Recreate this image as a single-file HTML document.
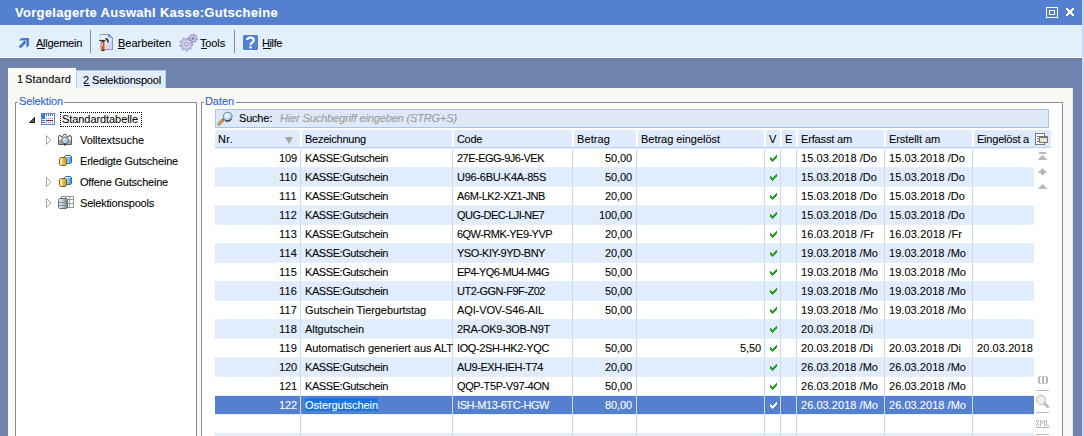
<!DOCTYPE html>
<html><head><meta charset="utf-8"><style>
html,body{margin:0;padding:0;width:1084px;height:436px;overflow:hidden;}
body{position:relative;font-family:"Liberation Sans",sans-serif;font-size:11px;}
.r{position:absolute;}
.t{position:absolute;white-space:nowrap;line-height:13px;-webkit-text-stroke:0.08px currentColor;}
</style></head><body>
<div class="r" style="left:0px;top:0px;width:1084px;height:436px;background:#6f83ad"></div>
<div class="r" style="left:1082px;top:0px;width:2px;height:436px;background:#c7d9f5"></div>
<div class="r" style="left:0px;top:0px;width:1082px;height:25px;background:#5580d0"></div>
<div class="t" style="top:6px;color:#fff;font-size:13px;letter-spacing:0.294px;font-weight:bold;left:15px;">Vorgelagerte Auswahl Kasse:Gutscheine</div>
<svg class="r" style="left:1046px;top:7px" width="12" height="11" viewBox="1046 7 12 11"><rect x="1046" y="7" width="12" height="1" fill="#ffffff"/><rect x="1046" y="8" width="1" height="1" fill="#ffffff"/><rect x="1057" y="8" width="1" height="1" fill="#ffffff"/><rect x="1046" y="9" width="1" height="1" fill="#ffffff"/><rect x="1057" y="9" width="1" height="1" fill="#ffffff"/><rect x="1046" y="10" width="1" height="1" fill="#ffffff"/><rect x="1049" y="10" width="6" height="1" fill="#ffffff"/><rect x="1057" y="10" width="1" height="1" fill="#ffffff"/><rect x="1046" y="11" width="1" height="1" fill="#ffffff"/><rect x="1049" y="11" width="1" height="1" fill="#ffffff"/><rect x="1054" y="11" width="1" height="1" fill="#ffffff"/><rect x="1057" y="11" width="1" height="1" fill="#ffffff"/><rect x="1046" y="12" width="1" height="1" fill="#ffffff"/><rect x="1049" y="12" width="1" height="1" fill="#ffffff"/><rect x="1054" y="12" width="1" height="1" fill="#ffffff"/><rect x="1057" y="12" width="1" height="1" fill="#ffffff"/><rect x="1046" y="13" width="1" height="1" fill="#ffffff"/><rect x="1049" y="13" width="1" height="1" fill="#ffffff"/><rect x="1054" y="13" width="1" height="1" fill="#ffffff"/><rect x="1057" y="13" width="1" height="1" fill="#ffffff"/><rect x="1046" y="14" width="1" height="1" fill="#ffffff"/><rect x="1049" y="14" width="6" height="1" fill="#ffffff"/><rect x="1057" y="14" width="1" height="1" fill="#ffffff"/><rect x="1046" y="15" width="1" height="1" fill="#ffffff"/><rect x="1057" y="15" width="1" height="1" fill="#ffffff"/><rect x="1046" y="16" width="1" height="1" fill="#ffffff"/><rect x="1057" y="16" width="1" height="1" fill="#ffffff"/><rect x="1046" y="17" width="12" height="1" fill="#ffffff"/></svg>
<svg class="r" style="left:1066px;top:8px" width="8" height="8" viewBox="1066 8 8 8"><rect x="1066" y="8" width="2" height="1" fill="#ffffff"/><rect x="1072" y="8" width="2" height="1" fill="#ffffff"/><rect x="1066" y="9" width="3" height="1" fill="#ffffff"/><rect x="1071" y="9" width="3" height="1" fill="#ffffff"/><rect x="1067" y="10" width="6" height="1" fill="#ffffff"/><rect x="1068" y="11" width="4" height="1" fill="#ffffff"/><rect x="1068" y="12" width="4" height="1" fill="#ffffff"/><rect x="1067" y="13" width="6" height="1" fill="#ffffff"/><rect x="1066" y="14" width="3" height="1" fill="#ffffff"/><rect x="1071" y="14" width="3" height="1" fill="#ffffff"/><rect x="1066" y="15" width="2" height="1" fill="#ffffff"/><rect x="1072" y="15" width="2" height="1" fill="#ffffff"/></svg>
<div class="r" style="left:0px;top:25px;width:1082px;height:32px;background:#e2effd"></div>
<div class="r" style="left:0px;top:57px;width:1082px;height:1px;background:#ffffff"></div>
<div class="t" style="top:37px;color:#000;font-size:11px;letter-spacing:-0.256px;left:36px;">Allgemein</div>
<div class="r" style="left:37px;top:48px;width:8px;height:1px;background:#000"></div>
<div class="t" style="top:37px;color:#000;font-size:11px;letter-spacing:-0.020px;left:118px;">Bearbeiten</div>
<div class="r" style="left:118px;top:48px;width:7px;height:1px;background:#000"></div>
<div class="t" style="top:37px;color:#000;font-size:11px;letter-spacing:-0.136px;left:200px;">Tools</div>
<div class="r" style="left:201px;top:48px;width:6px;height:1px;background:#000"></div>
<div class="t" style="top:37px;color:#000;font-size:11px;letter-spacing:-0.401px;left:262px;">Hilfe</div>
<div class="r" style="left:263px;top:48px;width:8px;height:1px;background:#000"></div>
<div class="r" style="left:90px;top:30px;width:1px;height:23px;background:#8c8984"></div>
<div class="r" style="left:234px;top:30px;width:1px;height:23px;background:#8c8984"></div>
<svg class="r" style="left:14px;top:32px" width="20" height="20" viewBox="14 32 20 20"><path d="M19 40.6 L21.6 38 L29 38 L29 45.6 L26.5 48.1 L26.5 40.6 Z" fill="#4b78d0"/><path d="M19.6 47.4 L25.5 41.5" stroke="#4b78d0" stroke-width="2.8"/></svg>
<svg class="r" style="left:96px;top:30px" width="22" height="24" viewBox="96 30 22 24"><defs><linearGradient id="pg" x1="0" y1="0" x2="1" y2="1"><stop offset="0" stop-color="#ffffff"/><stop offset="1" stop-color="#c4ccf0"/></linearGradient></defs><path d="M100.5 34.5 H109.5 L112.5 37.5 V49.5 H100.5 Z" fill="url(#pg)" stroke="#8a96b8"/><path d="M100.5 34.5 V49.5" stroke="#a8c0e8"/><path d="M109.5 34.5 V37.5 H112.5" fill="none" stroke="#8a96b8"/><rect x="108" y="35" width="2" height="2" fill="#3aa0f0"/><path d="M99 38 H106 V41 H99 Z" fill="#d8d8d8"/><path d="M99 38 H106 V39 H99 Z" fill="#f4f4f4"/><path d="M99 40.5 H105.5" stroke="#404040" stroke-width="1"/><path d="M105.5 38.5 Q108 38.8 108 42.5" fill="none" stroke="#202020" stroke-width="1.4"/><rect x="101.5" y="41" width="3" height="1.5" fill="#3a2a20"/><rect x="101.5" y="42.5" width="3" height="8" fill="#e4481a"/><rect x="102" y="43" width="1" height="3" fill="#f8d040"/><rect x="101.5" y="50" width="3" height="1" fill="#401808"/></svg>
<svg class="r" style="left:176px;top:30px" width="24" height="24" viewBox="176 30 24 24"><path d="M196.40,38.43 L197.58,38.91 L197.38,39.90 L196.10,39.89 L195.45,40.86 L195.95,42.03 L195.11,42.59 L194.22,41.68 L193.07,41.90 L192.59,43.08 L191.60,42.88 L191.61,41.60 L190.64,40.95 L189.47,41.45 L188.91,40.61 L189.82,39.72 L189.60,38.57 L188.42,38.09 L188.62,37.10 L189.90,37.11 L190.55,36.14 L190.05,34.97 L190.89,34.41 L191.78,35.32 L192.93,35.10 L193.41,33.92 L194.40,34.12 L194.39,35.40 L195.36,36.05 L196.53,35.55 L197.09,36.39 L196.18,37.28Z" fill="#c4c0e0" stroke="#8c86b8" stroke-width="0.8"/><circle cx="193" cy="38.5" r="1.3" fill="#8c86b8"/><path d="M191.28,43.82 L192.90,44.31 L192.77,45.60 L191.08,45.76 L190.42,47.13 L191.35,48.55 L190.42,49.45 L189.03,48.49 L187.63,49.12 L187.43,50.80 L186.15,50.90 L185.70,49.26 L184.22,48.85 L182.99,50.01 L181.94,49.26 L182.65,47.71 L181.79,46.45 L180.09,46.54 L179.78,45.29 L181.31,44.57 L181.46,43.05 L180.10,42.03 L180.66,40.87 L182.30,41.30 L183.40,40.23 L183.01,38.58 L184.19,38.05 L185.17,39.43 L186.69,39.32 L187.46,37.80 L188.70,38.15 L188.56,39.84 L189.81,40.74 L191.37,40.07 L192.09,41.13 L190.90,42.34Z" fill="#d0cce8" stroke="#8c86b8" stroke-width="0.8"/><ellipse cx="186.3" cy="44.3" rx="2" ry="1.4" fill="#f0f0fa" stroke="#8c86b8" stroke-width="0.8"/></svg>
<svg class="r" style="left:243px;top:35px" width="15" height="15" viewBox="243 35 15 15"><path d="M244 35 H257 L258 36 V49 L257 50 H244 L243 49 V36 Z" fill="#5080d0"/><path d="M247.3 40 Q247.3 37.6 250.5 37.6 Q253.8 37.6 253.8 40.2 Q253.8 42 251.6 43 Q250.6 43.5 250.6 45" fill="none" stroke="#fff" stroke-width="2.2"/><rect x="249.4" y="46.2" width="2.4" height="2.2" fill="#fff"/></svg>
<div class="r" style="left:8px;top:68px;width:68px;height:20px;background:#f9f8f4;border-top:1px solid #fff;box-sizing:border-box"></div>
<div class="r" style="left:76px;top:70px;width:90px;height:19px;background:#e0ecfb;border:1px solid #b4cbe9;border-bottom:none;box-sizing:border-box"></div>
<div class="t" style="top:73px;color:#000;font-size:11px;letter-spacing:-1.117px;left:17px;">1</div>
<div class="t" style="top:73px;color:#000;font-size:11px;letter-spacing:0.170px;left:25px;">Standard</div>
<div class="t" style="top:74px;color:#000;font-size:11px;letter-spacing:-0.117px;left:83px;">2</div>
<div class="r" style="left:84px;top:85px;width:6px;height:1px;background:#000"></div>
<div class="t" style="top:74px;color:#000;font-size:11px;letter-spacing:-0.182px;left:92px;">Selektionspool</div>
<div class="r" style="left:8px;top:88px;width:1064px;height:348px;background:#f9f8f4"></div>
<div class="r" style="left:1072px;top:88px;width:1px;height:348px;background:#dde5f1"></div>
<div class="r" style="left:8px;top:68px;width:1px;height:368px;background:#fbfcfe"></div>
<div class="r" style="left:15px;top:102px;width:182px;height:340px;border:1px solid #8c8c8c;background:#fff;box-sizing:border-box"></div>
<div class="r" style="left:18px;top:95px;width:46px;height:10px;background:#f9f8f4"></div>
<div class="t" style="top:95px;color:#2c63d4;font-size:11px;letter-spacing:-0.139px;left:19px;">Selektion</div>
<div class="r" style="left:201px;top:102px;width:862px;height:340px;border:1px solid #8c8c8c;background:#fff;box-sizing:border-box"></div>
<div class="r" style="left:204px;top:95px;width:32px;height:10px;background:#f9f8f4"></div>
<div class="t" style="top:95px;color:#2c63d4;font-size:11px;letter-spacing:-0.070px;left:205px;">Daten</div>
<svg class="r" style="left:29px;top:117px" width="6" height="6" viewBox="29 117 6 6"><rect x="34" y="117" width="1" height="1" fill="#262626"/><rect x="33" y="118" width="2" height="1" fill="#262626"/><rect x="32" y="119" width="1" height="1" fill="#262626"/><rect x="33" y="119" width="1" height="1" fill="#5a5a5a"/><rect x="34" y="119" width="1" height="1" fill="#262626"/><rect x="31" y="120" width="1" height="1" fill="#262626"/><rect x="32" y="120" width="2" height="1" fill="#5a5a5a"/><rect x="34" y="120" width="1" height="1" fill="#262626"/><rect x="30" y="121" width="1" height="1" fill="#262626"/><rect x="31" y="121" width="3" height="1" fill="#5a5a5a"/><rect x="34" y="121" width="1" height="1" fill="#262626"/><rect x="29" y="122" width="6" height="1" fill="#262626"/></svg>
<svg class="r" style="left:41px;top:113px" width="14" height="12" viewBox="41 113 14 12"><rect x="41" y="113" width="14" height="1" fill="#7680c4"/><rect x="41" y="114" width="1" height="1" fill="#7680c4"/><rect x="42" y="114" width="3" height="1" fill="#2f7ee0"/><rect x="45" y="114" width="1" height="1" fill="#ffffff"/><rect x="46" y="114" width="1" height="1" fill="#2f7ee0"/><rect x="47" y="114" width="1" height="1" fill="#ffffff"/><rect x="48" y="114" width="1" height="1" fill="#2f7ee0"/><rect x="49" y="114" width="1" height="1" fill="#ffffff"/><rect x="50" y="114" width="1" height="1" fill="#2f7ee0"/><rect x="51" y="114" width="1" height="1" fill="#ffffff"/><rect x="52" y="114" width="1" height="1" fill="#2f7ee0"/><rect x="53" y="114" width="1" height="1" fill="#ffffff"/><rect x="54" y="114" width="1" height="1" fill="#7680c4"/><rect x="41" y="115" width="1" height="1" fill="#7680c4"/><rect x="42" y="115" width="3" height="1" fill="#2f7ee0"/><rect x="45" y="115" width="1" height="1" fill="#ffffff"/><rect x="46" y="115" width="1" height="1" fill="#2f7ee0"/><rect x="47" y="115" width="1" height="1" fill="#ffffff"/><rect x="48" y="115" width="1" height="1" fill="#2f7ee0"/><rect x="49" y="115" width="1" height="1" fill="#ffffff"/><rect x="50" y="115" width="1" height="1" fill="#2f7ee0"/><rect x="51" y="115" width="1" height="1" fill="#ffffff"/><rect x="52" y="115" width="1" height="1" fill="#2f7ee0"/><rect x="53" y="115" width="1" height="1" fill="#ffffff"/><rect x="54" y="115" width="1" height="1" fill="#7680c4"/><rect x="41" y="116" width="1" height="1" fill="#7680c4"/><rect x="42" y="116" width="3" height="1" fill="#2f7ee0"/><rect x="45" y="116" width="9" height="1" fill="#ffffff"/><rect x="54" y="116" width="1" height="1" fill="#7680c4"/><rect x="41" y="117" width="1" height="1" fill="#7680c4"/><rect x="42" y="117" width="3" height="1" fill="#2f7ee0"/><rect x="45" y="117" width="1" height="1" fill="#ffffff"/><rect x="46" y="117" width="8" height="1" fill="#eef3ff"/><rect x="54" y="117" width="1" height="1" fill="#7680c4"/><rect x="41" y="118" width="1" height="1" fill="#7680c4"/><rect x="42" y="118" width="3" height="1" fill="#2f7ee0"/><rect x="45" y="118" width="1" height="1" fill="#ffffff"/><rect x="46" y="118" width="1" height="1" fill="#9096cc"/><rect x="47" y="118" width="1" height="1" fill="#eef3ff"/><rect x="48" y="118" width="1" height="1" fill="#9096cc"/><rect x="49" y="118" width="1" height="1" fill="#eef3ff"/><rect x="50" y="118" width="1" height="1" fill="#9096cc"/><rect x="51" y="118" width="1" height="1" fill="#eef3ff"/><rect x="52" y="118" width="1" height="1" fill="#9096cc"/><rect x="53" y="118" width="1" height="1" fill="#eef3ff"/><rect x="54" y="118" width="1" height="1" fill="#7680c4"/><rect x="41" y="119" width="1" height="1" fill="#7680c4"/><rect x="42" y="119" width="4" height="1" fill="#ffffff"/><rect x="46" y="119" width="8" height="1" fill="#eef3ff"/><rect x="54" y="119" width="1" height="1" fill="#7680c4"/><rect x="41" y="120" width="1" height="1" fill="#7680c4"/><rect x="42" y="120" width="3" height="1" fill="#2f7ee0"/><rect x="45" y="120" width="1" height="1" fill="#ffffff"/><rect x="46" y="120" width="1" height="1" fill="#303030"/><rect x="47" y="120" width="1" height="1" fill="#ff1818"/><rect x="48" y="120" width="1" height="1" fill="#303030"/><rect x="49" y="120" width="1" height="1" fill="#ff1818"/><rect x="50" y="120" width="1" height="1" fill="#303030"/><rect x="51" y="120" width="1" height="1" fill="#ff1818"/><rect x="52" y="120" width="1" height="1" fill="#303030"/><rect x="53" y="120" width="1" height="1" fill="#eef3ff"/><rect x="54" y="120" width="1" height="1" fill="#7680c4"/><rect x="41" y="121" width="1" height="1" fill="#7680c4"/><rect x="42" y="121" width="4" height="1" fill="#ffffff"/><rect x="46" y="121" width="8" height="1" fill="#eef3ff"/><rect x="54" y="121" width="1" height="1" fill="#7680c4"/><rect x="41" y="122" width="1" height="1" fill="#7680c4"/><rect x="42" y="122" width="3" height="1" fill="#2f7ee0"/><rect x="45" y="122" width="1" height="1" fill="#ffffff"/><rect x="46" y="122" width="1" height="1" fill="#9096cc"/><rect x="47" y="122" width="1" height="1" fill="#eef3ff"/><rect x="48" y="122" width="1" height="1" fill="#9096cc"/><rect x="49" y="122" width="1" height="1" fill="#eef3ff"/><rect x="50" y="122" width="1" height="1" fill="#9096cc"/><rect x="51" y="122" width="1" height="1" fill="#eef3ff"/><rect x="52" y="122" width="1" height="1" fill="#9096cc"/><rect x="53" y="122" width="1" height="1" fill="#eef3ff"/><rect x="54" y="122" width="1" height="1" fill="#7680c4"/><rect x="41" y="123" width="1" height="1" fill="#7680c4"/><rect x="42" y="123" width="4" height="1" fill="#ffffff"/><rect x="46" y="123" width="8" height="1" fill="#eef3ff"/><rect x="54" y="123" width="1" height="1" fill="#7680c4"/><rect x="41" y="124" width="14" height="1" fill="#7680c4"/></svg>
<div class="r" style="left:60px;top:112px;width:82px;height:15px;border:1px dotted #000;box-sizing:border-box"></div>
<div class="t" style="top:113px;color:#000;font-size:11px;letter-spacing:-0.070px;left:62px;">Standardtabelle</div>
<svg class="r" style="left:45px;top:135px" width="8" height="10" viewBox="45 135 8 10"><path d="M46.5 135.5 L50.8 140 L46.5 144.5 Z" fill="#fff" stroke="#a6a6a6"/></svg>
<svg class="r" style="left:57px;top:133px" width="16" height="13" viewBox="57 133 16 13"><path d="M58.5 136.5 H59 V135.5 H60.5 V136.5 H62.5 L63.5 135 V134.5 H66 V135 L67 136.5 H69 V135.5 H70.5 V136.5 H71.5 V144.5 H58.5 Z" fill="#ffffff" stroke="#6a5a4a"/><rect x="59" y="140" width="12" height="4" fill="#a8a8a8"/><circle cx="65" cy="140.3" r="3.4" fill="#a6d0fa" stroke="#6a5a4a"/><rect x="63.3" y="138.3" width="1.6" height="1.6" fill="#ffffff"/><rect x="64" y="144" width="2" height="1.5" fill="#3a3028"/></svg>
<div class="t" style="top:134px;color:#000;font-size:11px;letter-spacing:-0.063px;left:80px;">Volltextsuche</div>
<svg class="r" style="left:58px;top:155px" width="16" height="12" viewBox="58 155 16 12"><defs><linearGradient id="bl" x1="0" y1="0" x2="1" y2="0"><stop offset="0" stop-color="#dcecff"/><stop offset="0.5" stop-color="#8cc0f4"/><stop offset="1" stop-color="#3c88d8"/></linearGradient><linearGradient id="yl" x1="0" y1="0" x2="1" y2="0"><stop offset="0" stop-color="#fff0b0"/><stop offset="0.35" stop-color="#f0c850"/><stop offset="1" stop-color="#c89820"/></linearGradient></defs><path d="M64.5 156.5 L65.5 155.5 H70.5 L71.5 156.5 V162.5 L70.5 163.5 H65.5 L64.5 162.5 Z" fill="url(#bl)" stroke="#2a68b8"/><path d="M65.5 156.5 H70.5" stroke="#ffffff" stroke-width="1"/><path d="M59.5 158.5 L60.5 157.5 H65.5 L66.5 158.5 V164.5 L65.5 165.5 H60.5 L59.5 164.5 Z" fill="url(#yl)" stroke="#7a6428"/><rect x="61" y="159" width="1" height="5" fill="#ffffff"/></svg>
<div class="t" style="top:155px;color:#000;font-size:11px;letter-spacing:-0.206px;left:80px;">Erledigte Gutscheine</div>
<svg class="r" style="left:45px;top:177px" width="8" height="10" viewBox="45 177 8 10"><path d="M46.5 177.5 L50.8 182 L46.5 186.5 Z" fill="#fff" stroke="#a6a6a6"/></svg>
<svg class="r" style="left:58px;top:176px" width="16" height="12" viewBox="58 176 16 12"><defs><linearGradient id="bl" x1="0" y1="0" x2="1" y2="0"><stop offset="0" stop-color="#dcecff"/><stop offset="0.5" stop-color="#8cc0f4"/><stop offset="1" stop-color="#3c88d8"/></linearGradient><linearGradient id="yl" x1="0" y1="0" x2="1" y2="0"><stop offset="0" stop-color="#fff0b0"/><stop offset="0.35" stop-color="#f0c850"/><stop offset="1" stop-color="#c89820"/></linearGradient></defs><path d="M64.5 177.5 L65.5 176.5 H70.5 L71.5 177.5 V183.5 L70.5 184.5 H65.5 L64.5 183.5 Z" fill="url(#bl)" stroke="#2a68b8"/><path d="M65.5 177.5 H70.5" stroke="#ffffff" stroke-width="1"/><path d="M59.5 179.5 L60.5 178.5 H65.5 L66.5 179.5 V185.5 L65.5 186.5 H60.5 L59.5 185.5 Z" fill="url(#yl)" stroke="#7a6428"/><rect x="61" y="180" width="1" height="5" fill="#ffffff"/></svg>
<div class="t" style="top:176px;color:#000;font-size:11px;letter-spacing:-0.207px;left:80px;">Offene Gutscheine</div>
<svg class="r" style="left:45px;top:198px" width="8" height="10" viewBox="45 198 8 10"><path d="M46.5 198.5 L50.8 203 L46.5 207.5 Z" fill="#fff" stroke="#a6a6a6"/></svg>
<svg class="r" style="left:57px;top:195px" width="18" height="14" viewBox="57 195 18 14"><rect x="61.5" y="196.5" width="12" height="11" fill="#ffffff" stroke="#9a9a9a"/><path d="M62 199.5 H73 M62 203.5 H73 M65.5 197 V207 M69.5 197 V207" stroke="#9a9a9a"/><defs><linearGradient id="cy" x1="0" y1="0" x2="1" y2="0"><stop offset="0" stop-color="#e8eef2"/><stop offset="0.5" stop-color="#b8c8d0"/><stop offset="1" stop-color="#607880"/></linearGradient></defs><path d="M58.5 199.5 L59.5 198.5 H66.5 L67.5 199.5 V207.5 L66.5 208.5 H59.5 L58.5 207.5 Z" fill="url(#cy)" stroke="#6a6a6a"/><path d="M59 202.5 H67 M59 205.5 H67" stroke="#7a8a90" stroke-width="0.8"/></svg>
<div class="t" style="top:197px;color:#000;font-size:11px;letter-spacing:-0.203px;left:80px;">Selektionspools</div>
<div class="r" style="left:215px;top:109px;width:834px;height:19px;background:#dfe8f6;border:1px solid #a9c4ec;box-sizing:border-box"></div>
<svg class="r" style="left:216px;top:110px" width="20" height="17" viewBox="216 110 20 17"><defs><radialGradient id="lg" cx="0.35" cy="0.35" r="0.7"><stop offset="0" stop-color="#ffffff"/><stop offset="0.5" stop-color="#c8ecfc"/><stop offset="1" stop-color="#90c8f0"/></radialGradient></defs><path d="M218.8 124.2 L223.2 119.8" stroke="#6a6a7a" stroke-width="3" stroke-linecap="round"/><path d="M218.6 124.4 L222.4 120.6" stroke="#f0a030" stroke-width="2" stroke-linecap="round"/><circle cx="227.8" cy="116.6" r="4.3" fill="url(#lg)" stroke="#7a8898" stroke-width="1.1"/><path d="M231.2 118.8 A4.3 4.3 0 0 1 225.4 120.6" fill="none" stroke="#303840" stroke-width="1.3"/></svg>
<div class="t" style="top:112px;color:#000;font-size:11px;letter-spacing:-0.208px;left:239px;">Suche:</div>
<div class="t" style="top:112px;color:#9a9a9a;font-size:11px;letter-spacing:-0.144px;font-style:italic;left:280px;">Hier Suchbegriff eingeben (STRG+S)</div>
<div class="r" style="left:215px;top:130px;width:836px;height:17px;background:#dfebfc"></div>
<div class="r" style="left:215px;top:147px;width:836px;height:1px;background:#bcd2f2"></div>
<div class="r" style="left:300px;top:130px;width:2px;height:17px;background:#fff"></div>
<div class="r" style="left:452px;top:130px;width:2px;height:17px;background:#fff"></div>
<div class="r" style="left:572px;top:130px;width:2px;height:17px;background:#fff"></div>
<div class="r" style="left:636px;top:130px;width:2px;height:17px;background:#fff"></div>
<div class="r" style="left:764px;top:130px;width:2px;height:17px;background:#fff"></div>
<div class="r" style="left:780px;top:130px;width:2px;height:17px;background:#fff"></div>
<div class="r" style="left:796px;top:130px;width:2px;height:17px;background:#fff"></div>
<div class="r" style="left:884px;top:130px;width:2px;height:17px;background:#fff"></div>
<div class="r" style="left:972px;top:130px;width:2px;height:17px;background:#fff"></div>
<div class="t" style="top:133px;color:#000;font-size:11px;letter-spacing:0.315px;left:218px;">Nr.</div>
<div class="t" style="top:133px;color:#000;font-size:11px;letter-spacing:-0.237px;left:305px;">Bezeichnung</div>
<div class="t" style="top:133px;color:#000;font-size:11px;letter-spacing:-0.324px;left:457px;">Code</div>
<div class="t" style="top:133px;color:#000;font-size:11px;letter-spacing:0.099px;left:577px;">Betrag</div>
<div class="t" style="top:133px;color:#000;font-size:11px;letter-spacing:-0.031px;left:641px;">Betrag eingelöst</div>
<div class="t" style="top:133px;color:#000;font-size:11px;letter-spacing:-0.338px;left:769px;">V</div>
<div class="t" style="top:133px;color:#000;font-size:11px;letter-spacing:-1.338px;left:785px;">E</div>
<div class="t" style="top:133px;color:#000;font-size:11px;letter-spacing:-0.157px;left:801px;">Erfasst am</div>
<div class="t" style="top:133px;color:#000;font-size:11px;letter-spacing:-0.087px;left:889px;">Erstellt am</div>
<div class="t" style="top:133px;color:#000;font-size:11px;letter-spacing:-0.220px;left:977px;">Eingelöst a</div>
<svg class="r" style="left:285px;top:137px" width="9" height="7" viewBox="285 137 9 7"><path d="M285 137 H293 L289 144 Z" fill="#a8a498"/></svg>
<svg class="r" style="left:1034px;top:132px" width="16" height="14" viewBox="1034 132 16 14"><rect x="1035.5" y="133.5" width="9" height="11" fill="#fff" stroke="#767676"/><path d="M1037 136.5 H1040 M1037 139 H1040 M1037 141.5 H1040" stroke="#767676"/><rect x="1039.5" y="136.5" width="8" height="6" fill="#e8e8e0" stroke="#767676"/><rect x="1040" y="137" width="7" height="1" fill="#767676"/></svg>
<div class="r" style="left:215px;top:148px;width:819px;height:1px;background:#e6effd"></div>
<div class="r" style="left:215px;top:167px;width:819px;height:1px;background:#e6effd"></div>
<div class="r" style="left:215px;top:168px;width:819px;height:18px;background:#e1edfd"></div>
<div class="r" style="left:215px;top:186px;width:819px;height:1px;background:#e6effd"></div>
<div class="r" style="left:215px;top:205px;width:819px;height:1px;background:#e6effd"></div>
<div class="r" style="left:215px;top:206px;width:819px;height:18px;background:#e1edfd"></div>
<div class="r" style="left:215px;top:224px;width:819px;height:1px;background:#e6effd"></div>
<div class="r" style="left:215px;top:243px;width:819px;height:1px;background:#e6effd"></div>
<div class="r" style="left:215px;top:244px;width:819px;height:18px;background:#e1edfd"></div>
<div class="r" style="left:215px;top:262px;width:819px;height:1px;background:#e6effd"></div>
<div class="r" style="left:215px;top:281px;width:819px;height:1px;background:#e6effd"></div>
<div class="r" style="left:215px;top:282px;width:819px;height:18px;background:#e1edfd"></div>
<div class="r" style="left:215px;top:300px;width:819px;height:1px;background:#e6effd"></div>
<div class="r" style="left:215px;top:319px;width:819px;height:1px;background:#e6effd"></div>
<div class="r" style="left:215px;top:320px;width:819px;height:18px;background:#e1edfd"></div>
<div class="r" style="left:215px;top:338px;width:819px;height:1px;background:#e6effd"></div>
<div class="r" style="left:215px;top:357px;width:819px;height:1px;background:#e6effd"></div>
<div class="r" style="left:215px;top:358px;width:819px;height:18px;background:#e1edfd"></div>
<div class="r" style="left:215px;top:376px;width:819px;height:1px;background:#e6effd"></div>
<div class="r" style="left:215px;top:395px;width:819px;height:1px;background:#e6effd"></div>
<div class="r" style="left:215px;top:396px;width:819px;height:18px;background:#5580d0"></div>
<div class="r" style="left:215px;top:414px;width:819px;height:1px;background:#e6effd"></div>
<div class="r" style="left:215px;top:433px;width:819px;height:1px;background:#e6effd"></div>
<div class="r" style="left:215px;top:434px;width:819px;height:18px;background:#e1edfd"></div>
<div class="r" style="left:300px;top:149px;width:1px;height:287px;background:#c9dbf6"></div>
<div class="r" style="left:452px;top:149px;width:1px;height:287px;background:#c9dbf6"></div>
<div class="r" style="left:572px;top:149px;width:1px;height:287px;background:#c9dbf6"></div>
<div class="r" style="left:636px;top:149px;width:1px;height:287px;background:#c9dbf6"></div>
<div class="r" style="left:764px;top:149px;width:1px;height:287px;background:#c9dbf6"></div>
<div class="r" style="left:780px;top:149px;width:1px;height:287px;background:#c9dbf6"></div>
<div class="r" style="left:796px;top:149px;width:1px;height:287px;background:#c9dbf6"></div>
<div class="r" style="left:884px;top:149px;width:1px;height:287px;background:#c9dbf6"></div>
<div class="r" style="left:972px;top:149px;width:1px;height:287px;background:#c9dbf6"></div>
<div class="t" style="top:152px;color:#000;font-size:11px;letter-spacing:-0.117px;right:787px;">109</div>
<div class="t" style="top:152px;color:#000;font-size:11px;letter-spacing:-0.418px;left:305px;">KASSE:Gutschein</div>
<div class="t" style="top:152px;color:#000;font-size:11px;letter-spacing:-0.517px;left:457px;">27E-EGG-9J6-VEK</div>
<div class="t" style="top:152px;color:#000;font-size:11px;letter-spacing:-0.105px;right:452px;">50,00</div>
<svg class="r" style="left:770px;top:155px" width="7" height="7" viewBox="770 155 7 7"><path d="M776 155h1v1h-1zM775 156h1v1h-1zM776 156h1v1h-1zM770 157h1v1h-1zM774 157h1v1h-1zM775 157h1v1h-1zM776 157h1v1h-1zM770 158h1v1h-1zM771 158h1v1h-1zM773 158h1v1h-1zM774 158h1v1h-1zM775 158h1v1h-1zM770 159h1v1h-1zM771 159h1v1h-1zM772 159h1v1h-1zM773 159h1v1h-1zM774 159h1v1h-1zM771 160h1v1h-1zM772 160h1v1h-1zM773 160h1v1h-1zM772 161h1v1h-1z" fill="#22a020"/></svg>
<div class="t" style="top:152px;color:#000;font-size:11px;letter-spacing:0.055px;left:801px;">15.03.2018 /Do</div>
<div class="t" style="top:152px;color:#000;font-size:11px;letter-spacing:0.055px;left:889px;">15.03.2018 /Do</div>
<div class="t" style="top:171px;color:#000;font-size:11px;letter-spacing:0.155px;right:787px;">110</div>
<div class="t" style="top:171px;color:#000;font-size:11px;letter-spacing:-0.418px;left:305px;">KASSE:Gutschein</div>
<div class="t" style="top:171px;color:#000;font-size:11px;letter-spacing:-0.262px;left:457px;">U96-6BU-K4A-85S</div>
<div class="t" style="top:171px;color:#000;font-size:11px;letter-spacing:-0.105px;right:452px;">50,00</div>
<svg class="r" style="left:770px;top:174px" width="7" height="7" viewBox="770 174 7 7"><path d="M776 174h1v1h-1zM775 175h1v1h-1zM776 175h1v1h-1zM770 176h1v1h-1zM774 176h1v1h-1zM775 176h1v1h-1zM776 176h1v1h-1zM770 177h1v1h-1zM771 177h1v1h-1zM773 177h1v1h-1zM774 177h1v1h-1zM775 177h1v1h-1zM770 178h1v1h-1zM771 178h1v1h-1zM772 178h1v1h-1zM773 178h1v1h-1zM774 178h1v1h-1zM771 179h1v1h-1zM772 179h1v1h-1zM773 179h1v1h-1zM772 180h1v1h-1z" fill="#22a020"/></svg>
<div class="t" style="top:171px;color:#000;font-size:11px;letter-spacing:0.055px;left:801px;">15.03.2018 /Do</div>
<div class="t" style="top:171px;color:#000;font-size:11px;letter-spacing:0.055px;left:889px;">15.03.2018 /Do</div>
<div class="t" style="top:190px;color:#000;font-size:11px;letter-spacing:0.427px;right:787px;">111</div>
<div class="t" style="top:190px;color:#000;font-size:11px;letter-spacing:-0.418px;left:305px;">KASSE:Gutschein</div>
<div class="t" style="top:190px;color:#000;font-size:11px;letter-spacing:-0.409px;left:457px;">A6M-LK2-XZ1-JNB</div>
<div class="t" style="top:190px;color:#000;font-size:11px;letter-spacing:-0.105px;right:452px;">20,00</div>
<svg class="r" style="left:770px;top:193px" width="7" height="7" viewBox="770 193 7 7"><path d="M776 193h1v1h-1zM775 194h1v1h-1zM776 194h1v1h-1zM770 195h1v1h-1zM774 195h1v1h-1zM775 195h1v1h-1zM776 195h1v1h-1zM770 196h1v1h-1zM771 196h1v1h-1zM773 196h1v1h-1zM774 196h1v1h-1zM775 196h1v1h-1zM770 197h1v1h-1zM771 197h1v1h-1zM772 197h1v1h-1zM773 197h1v1h-1zM774 197h1v1h-1zM771 198h1v1h-1zM772 198h1v1h-1zM773 198h1v1h-1zM772 199h1v1h-1z" fill="#22a020"/></svg>
<div class="t" style="top:190px;color:#000;font-size:11px;letter-spacing:0.055px;left:801px;">15.03.2018 /Do</div>
<div class="t" style="top:190px;color:#000;font-size:11px;letter-spacing:0.055px;left:889px;">15.03.2018 /Do</div>
<div class="t" style="top:209px;color:#000;font-size:11px;letter-spacing:0.155px;right:787px;">112</div>
<div class="t" style="top:209px;color:#000;font-size:11px;letter-spacing:-0.418px;left:305px;">KASSE:Gutschein</div>
<div class="t" style="top:209px;color:#000;font-size:11px;letter-spacing:-0.556px;left:457px;">QUG-DEC-LJI-NE7</div>
<div class="t" style="top:209px;color:#000;font-size:11px;letter-spacing:-0.107px;right:452px;">100,00</div>
<svg class="r" style="left:770px;top:212px" width="7" height="7" viewBox="770 212 7 7"><path d="M776 212h1v1h-1zM775 213h1v1h-1zM776 213h1v1h-1zM770 214h1v1h-1zM774 214h1v1h-1zM775 214h1v1h-1zM776 214h1v1h-1zM770 215h1v1h-1zM771 215h1v1h-1zM773 215h1v1h-1zM774 215h1v1h-1zM775 215h1v1h-1zM770 216h1v1h-1zM771 216h1v1h-1zM772 216h1v1h-1zM773 216h1v1h-1zM774 216h1v1h-1zM771 217h1v1h-1zM772 217h1v1h-1zM773 217h1v1h-1zM772 218h1v1h-1z" fill="#22a020"/></svg>
<div class="t" style="top:209px;color:#000;font-size:11px;letter-spacing:0.055px;left:801px;">15.03.2018 /Do</div>
<div class="t" style="top:209px;color:#000;font-size:11px;letter-spacing:0.055px;left:889px;">15.03.2018 /Do</div>
<div class="t" style="top:228px;color:#000;font-size:11px;letter-spacing:0.155px;right:787px;">113</div>
<div class="t" style="top:228px;color:#000;font-size:11px;letter-spacing:-0.418px;left:305px;">KASSE:Gutschein</div>
<div class="t" style="top:228px;color:#000;font-size:11px;letter-spacing:-0.540px;left:457px;">6QW-RMK-YE9-YVP</div>
<div class="t" style="top:228px;color:#000;font-size:11px;letter-spacing:-0.105px;right:452px;">20,00</div>
<svg class="r" style="left:770px;top:231px" width="7" height="7" viewBox="770 231 7 7"><path d="M776 231h1v1h-1zM775 232h1v1h-1zM776 232h1v1h-1zM770 233h1v1h-1zM774 233h1v1h-1zM775 233h1v1h-1zM776 233h1v1h-1zM770 234h1v1h-1zM771 234h1v1h-1zM773 234h1v1h-1zM774 234h1v1h-1zM775 234h1v1h-1zM770 235h1v1h-1zM771 235h1v1h-1zM772 235h1v1h-1zM773 235h1v1h-1zM774 235h1v1h-1zM771 236h1v1h-1zM772 236h1v1h-1zM773 236h1v1h-1zM772 237h1v1h-1z" fill="#22a020"/></svg>
<div class="t" style="top:228px;color:#000;font-size:11px;letter-spacing:0.104px;left:801px;">16.03.2018 /Fr</div>
<div class="t" style="top:228px;color:#000;font-size:11px;letter-spacing:0.104px;left:889px;">16.03.2018 /Fr</div>
<div class="t" style="top:247px;color:#000;font-size:11px;letter-spacing:0.155px;right:787px;">114</div>
<div class="t" style="top:247px;color:#000;font-size:11px;letter-spacing:-0.418px;left:305px;">KASSE:Gutschein</div>
<div class="t" style="top:247px;color:#000;font-size:11px;letter-spacing:-0.464px;left:457px;">YSO-KIY-9YD-BNY</div>
<div class="t" style="top:247px;color:#000;font-size:11px;letter-spacing:-0.105px;right:452px;">20,00</div>
<svg class="r" style="left:770px;top:250px" width="7" height="7" viewBox="770 250 7 7"><path d="M776 250h1v1h-1zM775 251h1v1h-1zM776 251h1v1h-1zM770 252h1v1h-1zM774 252h1v1h-1zM775 252h1v1h-1zM776 252h1v1h-1zM770 253h1v1h-1zM771 253h1v1h-1zM773 253h1v1h-1zM774 253h1v1h-1zM775 253h1v1h-1zM770 254h1v1h-1zM771 254h1v1h-1zM772 254h1v1h-1zM773 254h1v1h-1zM774 254h1v1h-1zM771 255h1v1h-1zM772 255h1v1h-1zM773 255h1v1h-1zM772 256h1v1h-1z" fill="#22a020"/></svg>
<div class="t" style="top:247px;color:#000;font-size:11px;letter-spacing:0.040px;left:801px;">19.03.2018 /Mo</div>
<div class="t" style="top:247px;color:#000;font-size:11px;letter-spacing:0.040px;left:889px;">19.03.2018 /Mo</div>
<div class="t" style="top:266px;color:#000;font-size:11px;letter-spacing:0.155px;right:787px;">115</div>
<div class="t" style="top:266px;color:#000;font-size:11px;letter-spacing:-0.418px;left:305px;">KASSE:Gutschein</div>
<div class="t" style="top:266px;color:#000;font-size:11px;letter-spacing:-0.590px;left:457px;">EP4-YQ6-MU4-M4G</div>
<div class="t" style="top:266px;color:#000;font-size:11px;letter-spacing:-0.105px;right:452px;">50,00</div>
<svg class="r" style="left:770px;top:269px" width="7" height="7" viewBox="770 269 7 7"><path d="M776 269h1v1h-1zM775 270h1v1h-1zM776 270h1v1h-1zM770 271h1v1h-1zM774 271h1v1h-1zM775 271h1v1h-1zM776 271h1v1h-1zM770 272h1v1h-1zM771 272h1v1h-1zM773 272h1v1h-1zM774 272h1v1h-1zM775 272h1v1h-1zM770 273h1v1h-1zM771 273h1v1h-1zM772 273h1v1h-1zM773 273h1v1h-1zM774 273h1v1h-1zM771 274h1v1h-1zM772 274h1v1h-1zM773 274h1v1h-1zM772 275h1v1h-1z" fill="#22a020"/></svg>
<div class="t" style="top:266px;color:#000;font-size:11px;letter-spacing:0.040px;left:801px;">19.03.2018 /Mo</div>
<div class="t" style="top:266px;color:#000;font-size:11px;letter-spacing:0.040px;left:889px;">19.03.2018 /Mo</div>
<div class="t" style="top:285px;color:#000;font-size:11px;letter-spacing:0.155px;right:787px;">116</div>
<div class="t" style="top:285px;color:#000;font-size:11px;letter-spacing:-0.418px;left:305px;">KASSE:Gutschein</div>
<div class="t" style="top:285px;color:#000;font-size:11px;letter-spacing:-0.489px;left:457px;">UT2-GGN-F9F-Z02</div>
<div class="t" style="top:285px;color:#000;font-size:11px;letter-spacing:-0.105px;right:452px;">50,00</div>
<svg class="r" style="left:770px;top:288px" width="7" height="7" viewBox="770 288 7 7"><path d="M776 288h1v1h-1zM775 289h1v1h-1zM776 289h1v1h-1zM770 290h1v1h-1zM774 290h1v1h-1zM775 290h1v1h-1zM776 290h1v1h-1zM770 291h1v1h-1zM771 291h1v1h-1zM773 291h1v1h-1zM774 291h1v1h-1zM775 291h1v1h-1zM770 292h1v1h-1zM771 292h1v1h-1zM772 292h1v1h-1zM773 292h1v1h-1zM774 292h1v1h-1zM771 293h1v1h-1zM772 293h1v1h-1zM773 293h1v1h-1zM772 294h1v1h-1z" fill="#22a020"/></svg>
<div class="t" style="top:285px;color:#000;font-size:11px;letter-spacing:0.040px;left:801px;">19.03.2018 /Mo</div>
<div class="t" style="top:285px;color:#000;font-size:11px;letter-spacing:0.040px;left:889px;">19.03.2018 /Mo</div>
<div class="t" style="top:304px;color:#000;font-size:11px;letter-spacing:0.155px;right:787px;">117</div>
<div class="t" style="top:304px;color:#000;font-size:11px;letter-spacing:-0.079px;left:305px;">Gutschein Tiergeburtstag</div>
<div class="t" style="top:304px;color:#000;font-size:11px;letter-spacing:-0.110px;left:457px;">AQI-VOV-S46-AIL</div>
<div class="t" style="top:304px;color:#000;font-size:11px;letter-spacing:-0.105px;right:452px;">50,00</div>
<svg class="r" style="left:770px;top:307px" width="7" height="7" viewBox="770 307 7 7"><path d="M776 307h1v1h-1zM775 308h1v1h-1zM776 308h1v1h-1zM770 309h1v1h-1zM774 309h1v1h-1zM775 309h1v1h-1zM776 309h1v1h-1zM770 310h1v1h-1zM771 310h1v1h-1zM773 310h1v1h-1zM774 310h1v1h-1zM775 310h1v1h-1zM770 311h1v1h-1zM771 311h1v1h-1zM772 311h1v1h-1zM773 311h1v1h-1zM774 311h1v1h-1zM771 312h1v1h-1zM772 312h1v1h-1zM773 312h1v1h-1zM772 313h1v1h-1z" fill="#22a020"/></svg>
<div class="t" style="top:304px;color:#000;font-size:11px;letter-spacing:0.040px;left:801px;">19.03.2018 /Mo</div>
<div class="t" style="top:304px;color:#000;font-size:11px;letter-spacing:0.040px;left:889px;">19.03.2018 /Mo</div>
<div class="t" style="top:323px;color:#000;font-size:11px;letter-spacing:0.155px;right:787px;">118</div>
<div class="t" style="top:323px;color:#000;font-size:11px;letter-spacing:-0.077px;left:305px;">Altgutschein</div>
<div class="t" style="top:323px;color:#000;font-size:11px;letter-spacing:-0.279px;left:457px;">2RA-OK9-3OB-N9T</div>
<div class="t" style="top:323px;color:#000;font-size:11px;letter-spacing:0.000px;right:452px;"></div>
<svg class="r" style="left:770px;top:326px" width="7" height="7" viewBox="770 326 7 7"><path d="M776 326h1v1h-1zM775 327h1v1h-1zM776 327h1v1h-1zM770 328h1v1h-1zM774 328h1v1h-1zM775 328h1v1h-1zM776 328h1v1h-1zM770 329h1v1h-1zM771 329h1v1h-1zM773 329h1v1h-1zM774 329h1v1h-1zM775 329h1v1h-1zM770 330h1v1h-1zM771 330h1v1h-1zM772 330h1v1h-1zM773 330h1v1h-1zM774 330h1v1h-1zM771 331h1v1h-1zM772 331h1v1h-1zM773 331h1v1h-1zM772 332h1v1h-1z" fill="#22a020"/></svg>
<div class="t" style="top:323px;color:#000;font-size:11px;letter-spacing:0.032px;left:801px;">20.03.2018 /Di</div>
<div class="t" style="top:342px;color:#000;font-size:11px;letter-spacing:0.155px;right:787px;">119</div>
<div class="t" style="top:342px;color:#000;font-size:11px;letter-spacing:-0.055px;left:305px;">Automatisch generiert aus ALT</div>
<div class="t" style="top:342px;color:#000;font-size:11px;letter-spacing:-0.386px;left:457px;">IOQ-2SH-HK2-YQC</div>
<div class="t" style="top:342px;color:#000;font-size:11px;letter-spacing:-0.105px;right:452px;">50,00</div>
<div class="t" style="top:342px;color:#000;font-size:11px;letter-spacing:-0.102px;right:323px;">5,50</div>
<svg class="r" style="left:770px;top:345px" width="7" height="7" viewBox="770 345 7 7"><path d="M776 345h1v1h-1zM775 346h1v1h-1zM776 346h1v1h-1zM770 347h1v1h-1zM774 347h1v1h-1zM775 347h1v1h-1zM776 347h1v1h-1zM770 348h1v1h-1zM771 348h1v1h-1zM773 348h1v1h-1zM774 348h1v1h-1zM775 348h1v1h-1zM770 349h1v1h-1zM771 349h1v1h-1zM772 349h1v1h-1zM773 349h1v1h-1zM774 349h1v1h-1zM771 350h1v1h-1zM772 350h1v1h-1zM773 350h1v1h-1zM772 351h1v1h-1z" fill="#22a020"/></svg>
<div class="t" style="top:342px;color:#000;font-size:11px;letter-spacing:0.032px;left:801px;">20.03.2018 /Di</div>
<div class="t" style="top:342px;color:#000;font-size:11px;letter-spacing:0.032px;left:889px;">20.03.2018 /Di</div>
<div class="t" style="top:342px;color:#000;font-size:11px;letter-spacing:0.095px;left:977px;">20.03.2018</div>
<div class="t" style="top:361px;color:#000;font-size:11px;letter-spacing:-0.117px;right:787px;">120</div>
<div class="t" style="top:361px;color:#000;font-size:11px;letter-spacing:-0.418px;left:305px;">KASSE:Gutschein</div>
<div class="t" style="top:361px;color:#000;font-size:11px;letter-spacing:-0.420px;left:457px;">AU9-EXH-IEH-T74</div>
<div class="t" style="top:361px;color:#000;font-size:11px;letter-spacing:-0.105px;right:452px;">20,00</div>
<svg class="r" style="left:770px;top:364px" width="7" height="7" viewBox="770 364 7 7"><path d="M776 364h1v1h-1zM775 365h1v1h-1zM776 365h1v1h-1zM770 366h1v1h-1zM774 366h1v1h-1zM775 366h1v1h-1zM776 366h1v1h-1zM770 367h1v1h-1zM771 367h1v1h-1zM773 367h1v1h-1zM774 367h1v1h-1zM775 367h1v1h-1zM770 368h1v1h-1zM771 368h1v1h-1zM772 368h1v1h-1zM773 368h1v1h-1zM774 368h1v1h-1zM771 369h1v1h-1zM772 369h1v1h-1zM773 369h1v1h-1zM772 370h1v1h-1z" fill="#22a020"/></svg>
<div class="t" style="top:361px;color:#000;font-size:11px;letter-spacing:0.040px;left:801px;">26.03.2018 /Mo</div>
<div class="t" style="top:361px;color:#000;font-size:11px;letter-spacing:0.040px;left:889px;">26.03.2018 /Mo</div>
<div class="t" style="top:380px;color:#000;font-size:11px;letter-spacing:-0.117px;right:787px;">121</div>
<div class="t" style="top:380px;color:#000;font-size:11px;letter-spacing:-0.418px;left:305px;">KASSE:Gutschein</div>
<div class="t" style="top:380px;color:#000;font-size:11px;letter-spacing:-0.387px;left:457px;">QQP-T5P-V97-4ON</div>
<div class="t" style="top:380px;color:#000;font-size:11px;letter-spacing:-0.105px;right:452px;">50,00</div>
<svg class="r" style="left:770px;top:383px" width="7" height="7" viewBox="770 383 7 7"><path d="M776 383h1v1h-1zM775 384h1v1h-1zM776 384h1v1h-1zM770 385h1v1h-1zM774 385h1v1h-1zM775 385h1v1h-1zM776 385h1v1h-1zM770 386h1v1h-1zM771 386h1v1h-1zM773 386h1v1h-1zM774 386h1v1h-1zM775 386h1v1h-1zM770 387h1v1h-1zM771 387h1v1h-1zM772 387h1v1h-1zM773 387h1v1h-1zM774 387h1v1h-1zM771 388h1v1h-1zM772 388h1v1h-1zM773 388h1v1h-1zM772 389h1v1h-1z" fill="#22a020"/></svg>
<div class="t" style="top:380px;color:#000;font-size:11px;letter-spacing:0.040px;left:801px;">26.03.2018 /Mo</div>
<div class="t" style="top:380px;color:#000;font-size:11px;letter-spacing:0.040px;left:889px;">26.03.2018 /Mo</div>
<div class="t" style="top:399px;color:#fff;font-size:11px;letter-spacing:-0.117px;right:787px;">122</div>
<div class="r" style="left:305px;top:398px;width:73px;height:13px;background:#1a76dc"></div>
<div class="t" style="top:399px;color:#fff;font-size:11px;letter-spacing:-0.070px;left:305px;">Ostergutschein</div>
<div class="t" style="top:399px;color:#fff;font-size:11px;letter-spacing:-0.426px;left:457px;">ISH-M13-6TC-HGW</div>
<div class="t" style="top:399px;color:#fff;font-size:11px;letter-spacing:-0.105px;right:452px;">80,00</div>
<svg class="r" style="left:770px;top:402px" width="7" height="7" viewBox="770 402 7 7"><path d="M776 402h1v1h-1zM775 403h1v1h-1zM776 403h1v1h-1zM770 404h1v1h-1zM774 404h1v1h-1zM775 404h1v1h-1zM776 404h1v1h-1zM770 405h1v1h-1zM771 405h1v1h-1zM773 405h1v1h-1zM774 405h1v1h-1zM775 405h1v1h-1zM770 406h1v1h-1zM771 406h1v1h-1zM772 406h1v1h-1zM773 406h1v1h-1zM774 406h1v1h-1zM771 407h1v1h-1zM772 407h1v1h-1zM773 407h1v1h-1zM772 408h1v1h-1z" fill="#fff"/></svg>
<div class="t" style="top:399px;color:#fff;font-size:11px;letter-spacing:0.040px;left:801px;">26.03.2018 /Mo</div>
<div class="t" style="top:399px;color:#fff;font-size:11px;letter-spacing:0.040px;left:889px;">26.03.2018 /Mo</div>
<svg class="r" style="left:1036px;top:150px" width="14" height="40" viewBox="1036 150 14 40"><rect x="1039" y="152" width="7" height="2" fill="#b8b8b8"/><path d="M1037.6 160 L1042.5 155 L1047.4 160 Z" fill="#b8b8b8"/><path d="M1037.6 173 L1042.5 168 L1047.4 173 Z" fill="#b8b8b8"/><rect x="1041" y="172.5" width="3" height="2.5" fill="#b8b8b8"/><path d="M1037.6 189 L1042.5 184 L1047.4 189 Z" fill="#b8b8b8"/></svg>
<svg class="r" style="left:1038px;top:376px" width="10" height="8" viewBox="1038 376 10 8"><rect x="1039" y="376" width="2" height="1" fill="#b8b8b8"/><rect x="1042" y="376" width="2" height="1" fill="#b8b8b8"/><rect x="1045" y="376" width="2" height="1" fill="#b8b8b8"/><rect x="1038" y="377" width="2" height="1" fill="#b8b8b8"/><rect x="1042" y="377" width="2" height="1" fill="#b8b8b8"/><rect x="1046" y="377" width="2" height="1" fill="#b8b8b8"/><rect x="1038" y="378" width="2" height="1" fill="#b8b8b8"/><rect x="1042" y="378" width="2" height="1" fill="#b8b8b8"/><rect x="1046" y="378" width="2" height="1" fill="#b8b8b8"/><rect x="1038" y="379" width="2" height="1" fill="#b8b8b8"/><rect x="1042" y="379" width="2" height="1" fill="#b8b8b8"/><rect x="1046" y="379" width="2" height="1" fill="#b8b8b8"/><rect x="1038" y="380" width="2" height="1" fill="#b8b8b8"/><rect x="1042" y="380" width="2" height="1" fill="#b8b8b8"/><rect x="1046" y="380" width="2" height="1" fill="#b8b8b8"/><rect x="1038" y="381" width="2" height="1" fill="#b8b8b8"/><rect x="1042" y="381" width="2" height="1" fill="#b8b8b8"/><rect x="1046" y="381" width="2" height="1" fill="#b8b8b8"/><rect x="1038" y="382" width="2" height="1" fill="#b8b8b8"/><rect x="1042" y="382" width="2" height="1" fill="#b8b8b8"/><rect x="1046" y="382" width="2" height="1" fill="#b8b8b8"/><rect x="1039" y="383" width="2" height="1" fill="#b8b8b8"/><rect x="1042" y="383" width="2" height="1" fill="#b8b8b8"/><rect x="1045" y="383" width="2" height="1" fill="#b8b8b8"/></svg>
<svg class="r" style="left:1035px;top:389px" width="16" height="47" viewBox="1035 389 16 47"><rect x="1036" y="390" width="13" height="1" fill="#b8b8b8"/><path d="M1044 403 L1048.6 407.6" stroke="#b8b8b8" stroke-width="2.6"/><circle cx="1041" cy="400" r="4.5" fill="#eeeefa" stroke="#b8b8b8" stroke-width="1"/><rect x="1036" y="412" width="13" height="1" fill="#b8b8b8"/><rect x="1036" y="427" width="13" height="1" fill="#b8b8b8"/><rect x="1036" y="434" width="13" height="1" fill="#b8b8b8"/></svg>
<svg class="r" style="left:1036px;top:420px" width="13" height="6" viewBox="1036 420 13 6"><rect x="1036" y="420" width="1" height="1" fill="#b8b8b8"/><rect x="1038" y="420" width="1" height="1" fill="#b8b8b8"/><rect x="1040" y="420" width="1" height="1" fill="#b8b8b8"/><rect x="1044" y="420" width="1" height="1" fill="#b8b8b8"/><rect x="1046" y="420" width="1" height="1" fill="#b8b8b8"/><rect x="1036" y="421" width="1" height="1" fill="#b8b8b8"/><rect x="1038" y="421" width="1" height="1" fill="#b8b8b8"/><rect x="1040" y="421" width="2" height="1" fill="#b8b8b8"/><rect x="1043" y="421" width="2" height="1" fill="#b8b8b8"/><rect x="1046" y="421" width="1" height="1" fill="#b8b8b8"/><rect x="1037" y="422" width="1" height="1" fill="#b8b8b8"/><rect x="1040" y="422" width="1" height="1" fill="#b8b8b8"/><rect x="1042" y="422" width="1" height="1" fill="#b8b8b8"/><rect x="1044" y="422" width="1" height="1" fill="#b8b8b8"/><rect x="1046" y="422" width="1" height="1" fill="#b8b8b8"/><rect x="1037" y="423" width="1" height="1" fill="#b8b8b8"/><rect x="1040" y="423" width="1" height="1" fill="#b8b8b8"/><rect x="1042" y="423" width="1" height="1" fill="#b8b8b8"/><rect x="1044" y="423" width="1" height="1" fill="#b8b8b8"/><rect x="1046" y="423" width="1" height="1" fill="#b8b8b8"/><rect x="1036" y="424" width="1" height="1" fill="#b8b8b8"/><rect x="1038" y="424" width="1" height="1" fill="#b8b8b8"/><rect x="1040" y="424" width="1" height="1" fill="#b8b8b8"/><rect x="1044" y="424" width="1" height="1" fill="#b8b8b8"/><rect x="1046" y="424" width="1" height="1" fill="#b8b8b8"/><rect x="1036" y="425" width="1" height="1" fill="#b8b8b8"/><rect x="1038" y="425" width="1" height="1" fill="#b8b8b8"/><rect x="1040" y="425" width="1" height="1" fill="#b8b8b8"/><rect x="1044" y="425" width="1" height="1" fill="#b8b8b8"/><rect x="1046" y="425" width="3" height="1" fill="#b8b8b8"/></svg>
</body></html>
